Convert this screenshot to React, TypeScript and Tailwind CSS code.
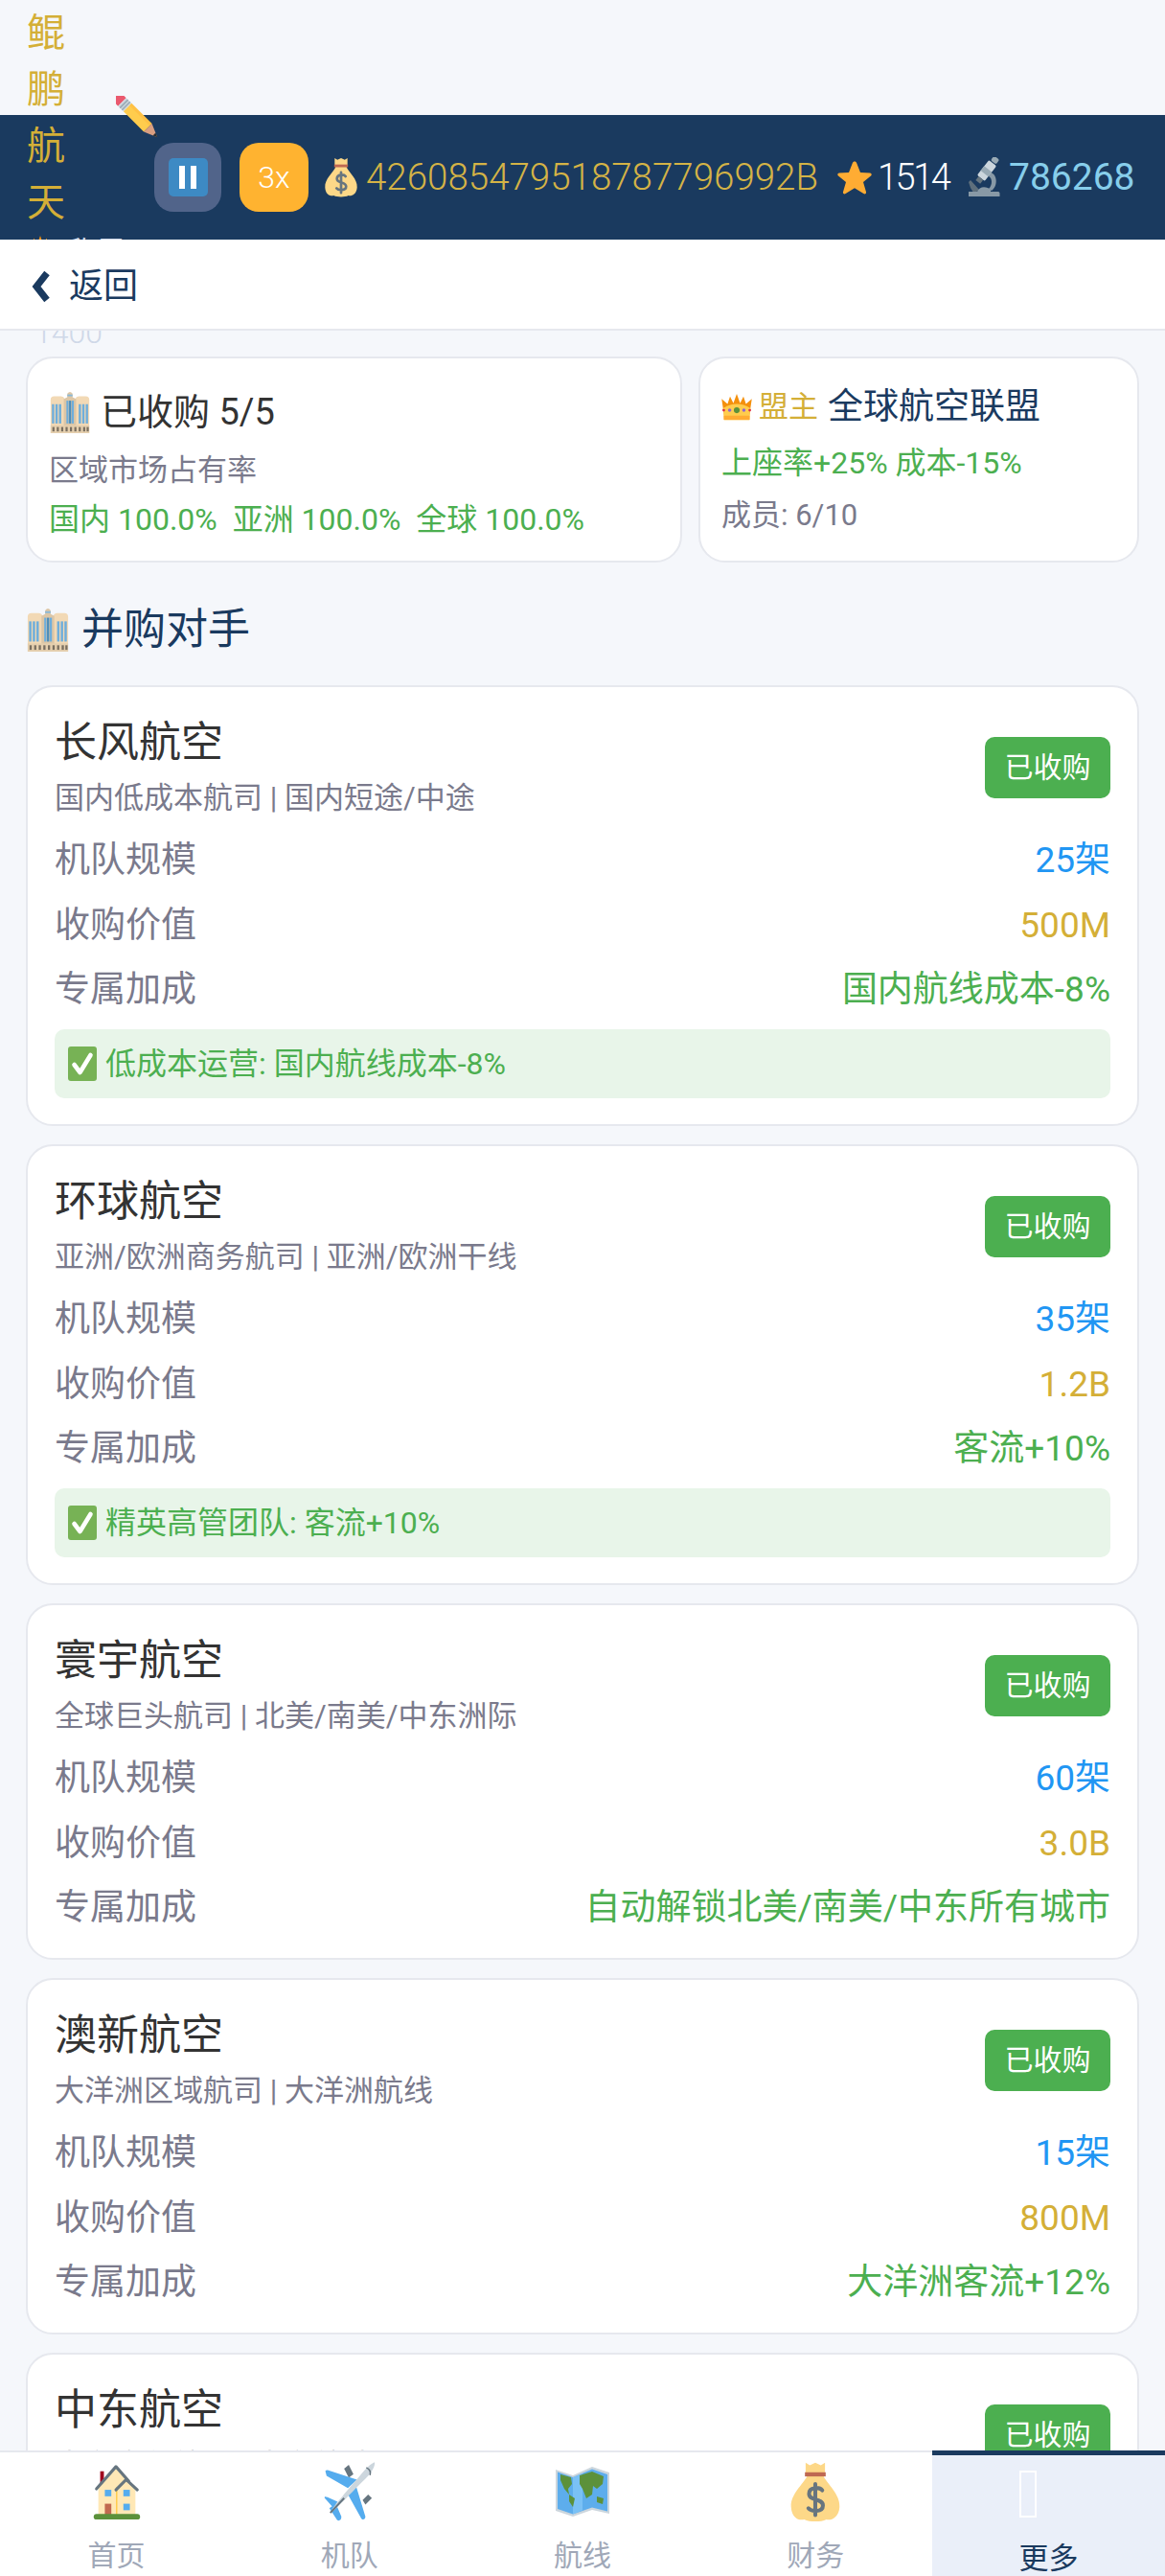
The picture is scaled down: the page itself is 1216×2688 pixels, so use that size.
import React from "react";

const Pencil = ({ className = "" }: { className?: string }) => (
  <svg viewBox="0 0 44 44" className={className}>
    <g transform="rotate(45 22 22)">
      <path d="M-6 16 H0 V28 H-6 Q-9 28 -9 25 V19 Q-9 16 -6 16 Z" fill="#EA596E" />
      <rect x="0" y="16" width="8" height="12" fill="#CCD6DD" />
      <rect x="2" y="16" width="1.5" height="12" fill="#99AAB5" />
      <rect x="5" y="16" width="1.5" height="12" fill="#99AAB5" />
      <rect x="8" y="16" width="30" height="12" fill="#FFCC4D" />
      <rect x="8" y="16" width="30" height="3" fill="#FFAC33" opacity="0.35" />
      <path d="M38 16 L52 22 L38 28 Z" fill="#D99E82" />
      <path d="M47.5 20 L52 22 L47.5 24 Z" fill="#292F33" />
    </g>
  </svg>
);

const MoneyBag = ({ className = "" }: { className?: string }) => (
  <svg viewBox="0 0 36 44" className={className}>
    <path d="M11 1 L14 3 L18 1 L22 3 L25 1 L25 8 L24 11 C27 17 36 24 35.5 33 C35 41 29 43 26 42 C22 44 14 44 10 42 C6 43 1 41 .5 33 C0 24 9 17 12 11 L11 8 Z" fill="#FDD888" />
    <rect x="10.5" y="8" width="15" height="3" fill="#BF6952" />
    <path d="M23 21 C21 18.5 13.5 18.5 13.5 23.5 C13.5 29 23.5 26.5 23.5 32 C23.5 37 15 36.5 13 34 M18 16.5 V39" fill="none" stroke="#67757F" strokeWidth="2.8" strokeLinecap="round" />
  </svg>
);

const Star = ({ className = "" }: { className?: string }) => (
  <svg viewBox="0 0 36 36" className={className}>
    <path d="M18 1.5 C19 1.5 19.8 2.2 20.2 3.2 L24 13 L34 13.5 C35.7 13.7 36.2 15.4 35 16.5 L27 23 L30 33.3 C30.4 35 28.8 36 27.4 35.1 L18 29.2 L8.6 35.1 C7.2 36 5.6 35 6 33.3 L9 23 L1 16.5 C-.2 15.4 .3 13.7 2 13.5 L12 13 L15.8 3.2 C16.2 2.2 17 1.5 18 1.5 Z" fill="#FFAC33" />
  </svg>
);

const Microscope = ({ className = "" }: { className?: string }) => (
  <svg viewBox="0 0 36 42" className={className}>
    <path d="M1 37 H6 L3 32 L1 26 L3 24 L12 34 L8 37 Z" fill="#66757F" opacity="0.9" />
    <path d="M1 36 H32 C33 36 33.5 37 33.5 38 V41 H1 Z" fill="#8899A6" />
    <path d="M10 36 C12 30 20 30 24 34 L24 36 Z" fill="#8899A6" />
    <path d="M24 16 C31 18 32 30 25 35 L22 33 C26 29 26 22 22 20 Z" fill="#8899A6" />
    <g transform="rotate(38 20 14)">
      <rect x="15" y="4" width="10" height="20" rx="1.5" fill="#CCD6DD" />
      <rect x="15" y="12" width="10" height="6" fill="#99AAB5" />
      <rect x="17" y="24" width="6" height="5" fill="#66757F" />
      <rect x="16.5" y="-3" width="7" height="6" rx="2" fill="#99AAB5" />
    </g>
  </svg>
);

const Building = ({ className = "" }: { className?: string }) => (
  <svg viewBox="0 0 44 48" className={className}>
    <path d="M0 10 Q0 6 4 6 H12 Q15 6 16 9 V48 H0 Z" fill="#F2D9B5" />
    <path d="M44 10 Q44 6 40 6 H32 Q29 6 28 9 V48 H44 Z" fill="#F2D9B5" />
    <path d="M15 9 L19 7 L19 3 Q22 -1 25 3 L25 7 L29 9 V48 H15 Z" fill="#DCC6A6" />
    <rect x="19" y="4" width="6" height="2" fill="#88B8D8" />
    {[2.5, 6.5, 10.5, 33, 37, 41].map((x) => (
      <rect key={x} x={x - 1} y="15" width="2.6" height="22" fill="#6FAEDB" />
    ))}
    {[18, 21, 24].map((x) => (
      <rect key={x} x={x} y="11" width="2.4" height="26" fill={x === 21 ? "#4D8DBA" : "#6FAEDB"} />
    ))}
    <rect x="0" y="39" width="44" height="9" fill="#E5CFAE" />
    {[2, 7, 12, 17, 22, 27, 32, 37, 41].map((x) => (
      <rect key={x} x={x} y="41" width="2.4" height="5" fill="#7A6F60" />
    ))}
  </svg>
);

const Crown = ({ className = "" }: { className?: string }) => (
  <svg viewBox="0 0 36 32" className={className}>
    <path d="M3 26 L0 6 L7 12 L10 3 L14 11 L18 0 L22 11 L26 3 L29 12 L36 6 L33 26 Z" fill="#F4900C" />
    <path d="M3 31 Q2 22 1.5 17 Q10 12 18 12 Q26 12 34.5 17 Q34 22 33 31 Z" fill="#FFCC4D" />
    <rect x="2.5" y="26" width="31" height="5" fill="#FFAC33" />
    <circle cx="18" cy="19.5" r="3.5" fill="#5C913B" />
    <circle cx="9.5" cy="19.5" r="2" fill="#9266CC" />
    <circle cx="26.5" cy="19.5" r="2" fill="#9266CC" />
    <circle cx="2.5" cy="19.5" r="1.6" fill="#DD2E44" />
    <circle cx="33.5" cy="19.5" r="1.6" fill="#DD2E44" />
  </svg>
);

const Check = ({ className = "" }: { className?: string }) => (
  <svg viewBox="0 0 30 36" className={className}>
    <rect width="30" height="36" rx="3" fill="#77B255" />
    <path d="M6.5 19 L12.5 27 L23.5 9" fill="none" stroke="#fff" strokeWidth="4.6" strokeLinecap="round" strokeLinejoin="round" />
  </svg>
);

const House = ({ className = "" }: { className?: string }) => (
  <svg viewBox="0 0 50 62" className={className}>
    <rect x="7" y="9" width="4" height="14" fill="#A0041E" />
    <path d="M5 27 L24 6 L37 20 L45 28 V58 H5 Z" fill="#FFE8B6" />
    <rect x="24" y="26" width="1.5" height="32" fill="#FFCC4D" />
    <path d="M3 28 L24 4 L38 20 M24 29 L35 18 L47 29" fill="none" stroke="#66757F" strokeWidth="3.2" strokeLinecap="round" strokeLinejoin="round" />
    <rect x="12" y="29" width="7" height="7" fill="#55ACEE" />
    <rect x="32" y="29" width="7" height="7" fill="#55ACEE" />
    <rect x="32" y="44" width="7" height="7" fill="#55ACEE" />
    <rect x="12" y="44" width="7" height="13" fill="#C1694F" />
    <rect x="0" y="55" width="50" height="6" rx="3" fill="#5C913B" />
  </svg>
);

const Plane = ({ className = "" }: { className?: string }) => (
  <svg viewBox="0 0 56 66" className={className}>
    <path d="M22 8 L27 4 L32 14 L27 18 Z" fill="#66757F" />
    <path d="M48 36 L52 40 L45 47 L42 42 Z" fill="#66757F" />
    <path d="M2 12 C1 10 3 9 5 10 L36 20 L26 29 L3 16 Z" fill="#55ACEE" />
    <path d="M34 24 L45 60 C45 64 41 64 40 61 L25 34 Z" fill="#55ACEE" />
    <path d="M1 40 C0 38 2 38 4 39 L15 44 L10 50 Z" fill="#55ACEE" />
    <path d="M13 46 L19 60 C19 65 15 65 14 63 L6 51 Z" fill="#55ACEE" />
    <path d="M7 56 C9 50 34 22 44 10 C48 5 54 1 55 1 C56 4 52 12 47 17 C36 28 13 52 9 55 Z" fill="#CCD6DD" />
    <path d="M7 56 L22 40" stroke="#66757F" strokeWidth="2" fill="none" />
    <path d="M46 7 C50 9 51 12 50 15" stroke="#66757F" strokeWidth="1.6" fill="none" />
  </svg>
);

const MapIcon = ({ className = "" }: { className?: string }) => (
  <svg viewBox="0 0 56 54" className={className}>
    <path d="M0 4 L18 10 L38 1 L56 7 V50 L38 46 L18 53 L0 47 Z" fill="#CCD6DD" />
    <path d="M2 6.5 L18 12 L38 3.5 L54 9 V47.5 L38 43.5 L18 50.5 L2 45 Z" fill="#5DADEC" />
    <path d="M18 12 L28 8 V46.5 L18 50.5 Z" fill="#88C9F9" opacity="0.7" />
    <path d="M5 9 L16 12 L17 19 L13 24 L14 30 L9 24 L5 15 Z" fill="#5C913B" />
    <path d="M14 30 L20 34 L18 43 L14 37 Z" fill="#5C913B" />
    <path d="M25 10 L38 6 L50 11 L49 19 L43 24 L39 21 L38 30 L32 34 L28 24 L25 19 Z" fill="#5C913B" />
    <path d="M43 32 L50 34 L49 40 L43 38 Z" fill="#5C913B" />
  </svg>
);

type Rival = { name: string; sub: string; fleet: string; value: string; bonus: string; perk?: string };

const rows: Rival[] = [
  { name: "长风航空", sub: "国内低成本航司 | 国内短途/中途", fleet: "25架", value: "500M", bonus: "国内航线成本-8%", perk: "低成本运营: 国内航线成本-8%" },
  { name: "环球航空", sub: "亚洲/欧洲商务航司 | 亚洲/欧洲干线", fleet: "35架", value: "1.2B", bonus: "客流+10%", perk: "精英高管团队: 客流+10%" },
  { name: "寰宇航空", sub: "全球巨头航司 | 北美/南美/中东洲际", fleet: "60架", value: "3.0B", bonus: "自动解锁北美/南美/中东所有城市" },
  { name: "澳新航空", sub: "大洋洲区域航司 | 大洋洲航线", fleet: "15架", value: "800M", bonus: "大洋洲客流+12%" },
  { name: "中东航空", sub: "中东豪华航司 | 中东航线", fleet: "20架", value: "1.5B", bonus: "中东客流+12%" },
];

const Row = ({ label, value, color }: { label: string; value: string; color: string }) => (
  <div className="flex h-[52px] translate-y-[1px] items-center justify-between text-[37px] leading-[52px]">
    <span className="text-[#7a7a8c]">{label}</span>
    <span className={color}>{value}</span>
  </div>
);

const RivalCard = ({ r }: { r: Rival }) => (
  <div className="shrink-0 rounded-[28px] border-2 border-[#e6e8ee] bg-white px-[28px] pt-[28px] pb-[27px]">
    <div className="flex items-center justify-between">
      <div>
        <div className="text-[44px] leading-[60px] text-[#333333]">{r.name}</div>
        <div className="mt-[5px] text-[31px] leading-[46px] text-[#7a7a8c]">{r.sub}</div>
      </div>
      <div className="flex h-[64px] w-[131px] items-center justify-center rounded-[10px] bg-[#4caf50] text-[30px] text-white">已收购</div>
    </div>
    <div className="mt-[15px] flex flex-col gap-[15.5px]">
      <Row label="机队规模" value={r.fleet} color="text-[#2196f3]" />
      <Row label="收购价值" value={r.value} color="text-[#d4af37]" />
      <Row label="专属加成" value={r.bonus} color="text-[#4caf50]" />
    </div>
    {r.perk && (
      <div className="mt-[16px] flex h-[72px] items-center gap-[9px] rounded-[10px] bg-[#e8f5e9] px-[14px] text-[32px] text-[#4caf50]">
        <Check className="h-[36px] w-[30px]" />
        <span>{r.perk}</span>
      </div>
    )}
  </div>
);

const Tab = ({ label, icon }: { label: string; icon: React.ReactNode }) => (
  <div className="flex flex-1 flex-col items-center pt-[11px]">
    <div className="flex h-[60px] shrink-0 items-center justify-center">{icon}</div>
    <div className="mt-[17px] text-[30px] leading-[40px] text-[#a0a8b8]">{label}</div>
  </div>
);

export default function App() {
  return (
    <div className="flex h-[2688px] w-[1216px] flex-col overflow-hidden bg-[#f5f7fb] font-['Roboto','Noto_Sans_CJK_SC',sans-serif]">
      <div className="h-[120px] shrink-0" />
      <header className="flex h-[130px] shrink-0 items-center bg-[#1a3a5f] pl-[27px]">
        <div className="relative w-[134px] shrink-0">
          <div className="ml-[1px] w-[44px] text-[40px] leading-[59px] text-[#d4af37]">鲲鹏航天</div>
          <div className="flex h-[124px] items-start gap-[14px] text-[30px] leading-[44px] text-[#cfd8e8]">
            <Crown className="mt-[5px] h-[26px] w-[30px] shrink-0" />
            <span>称霸</span>
          </div>
          <Pencil className="absolute left-[94px] top-[95px] h-[44px] w-[44px]" />
        </div>
        <div className="flex h-[72px] w-[70px] shrink-0 items-center justify-center rounded-[20px] bg-[#51648a]">
          <div className="flex h-[40px] w-[41px] items-center justify-center gap-[6px] rounded-[5px] bg-[#3d8ac4]">
            <span className="h-[24px] w-[6px] bg-white" />
            <span className="h-[24px] w-[6px] bg-white" />
          </div>
        </div>
        <div className="ml-[19px] flex h-[72px] w-[72px] shrink-0 items-center justify-center rounded-[20px] bg-[#ffb330] text-[32px] font-light text-white">3x</div>
        <MoneyBag className="ml-[16px] h-[42px] w-[36px] shrink-0" />
        <span className="ml-[8px] w-[472px] shrink-0 text-[38.5px] leading-none font-light whitespace-nowrap text-[#d4b346]">426085479518787796992B</span>
        <Star className="ml-[20px] h-[36px] w-[36px] shrink-0" />
        <span className="ml-[6px] w-[74px] shrink-0 text-[38px] leading-none font-light tracking-[-2.5px] text-white">1514</span>
        <Microscope className="ml-[20px] h-[42px] w-[36px] shrink-0" />
        <span className="ml-[7px] text-[39px] leading-none text-[#87ceeb]">786268</span>
      </header>
      <div className="relative z-10 flex h-[95px] shrink-0 items-center border-b-2 border-[#e6e8ee] bg-white pt-[4px] pl-[31px]">
        <svg viewBox="0 0 22 34" className="h-[34px] w-[24px]">
          <path d="M17 3 L6 17 L17 31" fill="none" stroke="#1a3a5f" strokeWidth="7" strokeLinejoin="miter" />
        </svg>
        <span className="ml-[17px] text-[36px] leading-[50px] text-[#1a3a5f]">返回</span>
      </div>
      <main className="flex min-h-0 flex-1 flex-col overflow-hidden px-[27px]">
        <div className="flex h-[27px] shrink-0 items-end pb-[9px] pl-[9px] text-[32px] leading-[32px] font-light text-[#cfd8e8]">1400</div>
        <div className="flex h-[215px] shrink-0 gap-[17px]">
          <div className="flex w-[685px] flex-col rounded-[28px] border-2 border-[#e6e8ee] bg-white pl-[22px]">
            <div className="mt-[30px] flex h-[52px] items-center gap-[10px] text-[38px] text-[#333333]">
              <Building className="h-[44px] w-[44px]" />
              <span>已收购 5/5</span>
            </div>
            <div className="mt-[12px] text-[31px] leading-[46px] text-[#7a7a8c]">区域市场占有率</div>
            <div className="mt-[5px] text-[32px] leading-[46px] whitespace-pre text-[#4caf50]">国内 100.0%  亚洲 100.0%  全球 100.0%</div>
          </div>
          <div className="flex w-[460px] flex-col rounded-[28px] border-2 border-[#e6e8ee] bg-white pl-[22px]">
            <div className="mt-[26px] flex h-[50px] items-center">
              <Crown className="h-[28px] w-[32px]" />
              <span className="ml-[7px] text-[31px] text-[#d4af37]">盟主</span>
              <span className="ml-[10px] text-[37px] text-[#1a3a5f]">全球航空联盟</span>
            </div>
            <div className="mt-[10px] text-[32px] leading-[46px] text-[#4caf50]">上座率+25% 成本-15%</div>
            <div className="mt-[9px] text-[31px] leading-[46px] text-[#7a7a8c]">成员: 6/10</div>
          </div>
        </div>
        <div className="mt-[40px] mb-[28px] flex h-[60px] shrink-0 items-center gap-[12px] text-[44px] text-[#1a3a5f]">
          <Building className="h-[46px] w-[46px]" />
          <span>并购对手</span>
        </div>
        <div className="flex flex-col gap-[19px]">
          {rows.map((r) => (
            <RivalCard key={r.name} r={r} />
          ))}
        </div>
      </main>
      <nav className="relative z-10 flex h-[131px] shrink-0 border-t-2 border-[#e6e8ee] bg-white">
        <Tab label="首页" icon={<House className="h-[60px] w-[50px]" />} />
        <Tab label="机队" icon={<Plane className="h-[64px] w-[54px]" />} />
        <Tab label="航线" icon={<MapIcon className="h-[54px] w-[56px]" />} />
        <Tab label="财务" icon={<MoneyBag className="h-[64px] w-[52px]" />} />
        <div className="-mt-[2px] flex flex-1 flex-col items-center border-t-[5px] border-[#1a3a5f] bg-[#eaeff9] pt-[16px]">
          <div className="mr-[42px] h-[49px] w-[18px] shrink-0 border-2 border-white" />
          <div className="mt-[23px] text-[31px] leading-[40px] text-[#1a3a5f]">更多</div>
        </div>
      </nav>
    </div>
  );
}
